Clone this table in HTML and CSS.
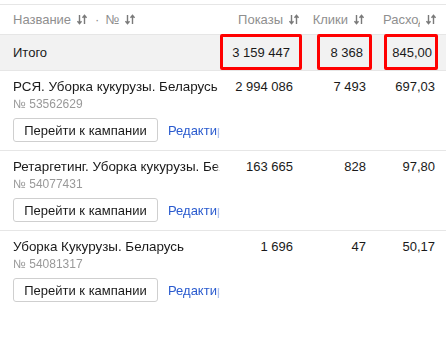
FILE: index.html
```html
<!DOCTYPE html>
<html lang="ru">
<head>
<meta charset="utf-8">
<link rel="stylesheet" href="styles.css">
</head>
<body>
<div class="table">
  <div class="row head">
    <div class="cell name-h">
      <span>Название</span>
      <svg class="sort" viewBox="0 0 10 11"><path d="M2.5 1V9.5M0.5 7.2L2.5 9.6L4.5 7.2M7.5 10V1.5M5.5 3.8L7.5 1.4L9.5 3.8"/></svg>
      <span class="dot">·</span>
      <span>№</span>
      <svg class="sort" viewBox="0 0 10 11"><path d="M2.5 1V9.5M0.5 7.2L2.5 9.6L4.5 7.2M7.5 10V1.5M5.5 3.8L7.5 1.4L9.5 3.8"/></svg>
    </div>
    <div class="cell num c1">Показы<svg class="sort" viewBox="0 0 10 11"><path d="M2.5 1V9.5M0.5 7.2L2.5 9.6L4.5 7.2M7.5 10V1.5M5.5 3.8L7.5 1.4L9.5 3.8"/></svg></div>
    <div class="cell num c2">Клики<svg class="sort" viewBox="0 0 10 11"><path d="M2.5 1V9.5M0.5 7.2L2.5 9.6L4.5 7.2M7.5 10V1.5M5.5 3.8L7.5 1.4L9.5 3.8"/></svg></div>
    <div class="cell num c3"><span class="trunc">Расход</span><svg class="sort" viewBox="0 0 10 11"><path d="M2.5 1V9.5M0.5 7.2L2.5 9.6L4.5 7.2M7.5 10V1.5M5.5 3.8L7.5 1.4L9.5 3.8"/></svg></div>
  </div>
  <div class="row total">
    <div class="cell name-t">Итого</div>
    <div class="cell tcell"><span class="box b1">3 159 447</span></div>
    <div class="cell tcell"><span class="box b2">8 368</span></div>
    <div class="cell tcell"><span class="box b3">845,00</span></div>
  </div>
  <div class="row item">
    <div class="cell name">
      <div class="title">РСЯ. Уборка кукурузы. Беларусь</div>
      <div class="id">№ 53562629</div>
      <div class="actions"><button class="btn">Перейти к кампании</button><a class="link" href="#">Редактировать</a></div>
    </div>
    <div class="cell val c1">2 994 086</div>
    <div class="cell val c2">7 493</div>
    <div class="cell val c3">697,03</div>
  </div>
  <div class="row item">
    <div class="cell name">
      <div class="title">Ретаргетинг. Уборка кукурузы. Беларусь</div>
      <div class="id">№ 54077431</div>
      <div class="actions"><button class="btn">Перейти к кампании</button><a class="link" href="#">Редактировать</a></div>
    </div>
    <div class="cell val c1">163 665</div>
    <div class="cell val c2">828</div>
    <div class="cell val c3">97,80</div>
  </div>
  <div class="row item last">
    <div class="cell name">
      <div class="title">Уборка Кукурузы. Беларусь</div>
      <div class="id">№ 54081317</div>
      <div class="actions"><button class="btn">Перейти к кампании</button><a class="link" href="#">Редактировать</a></div>
    </div>
    <div class="cell val c1">1 696</div>
    <div class="cell val c2">47</div>
    <div class="cell val c3">50,17</div>
  </div>
</div>
</body>
</html>
```

FILE: styles.css
```css
html, body {
  margin: 0;
  padding: 0;
  background: #fff;
}
body {
  font-family: "Liberation Sans", Arial, sans-serif;
  font-size: 13px;
  color: #1a1a1a;
}
.table {
  margin-top: 4px;
  border-top: 1px solid #e6e6e6;
  width: 446px;
  overflow: hidden;
}
.row {
  display: grid;
  grid-template-columns: 220px 82px 71px 73px;
  border-bottom: 1px solid #e6e6e6;
}
.row.last { border-bottom: none; }
.head {
  height: 29px;
  align-items: center;
  color: #8f8f8f;
}
.name-h {
  padding-left: 13px;
  display: flex;
  align-items: center;
}
.name-h .sort { margin: 0 0 0 6px; }
.dot { margin: 0 6px 0 8px; }
.sort {
  width: 10px;
  height: 11px;
  fill: none;
  stroke: #7a7a7a;
  stroke-width: 1.4;
  flex: none;
}
.num {
  display: flex;
  justify-content: flex-end;
  align-items: center;
}
.num .sort { margin-left: 6px; }
.head .c1 { padding-right: 3px; }
.head .c2 { padding-right: 9px; }
.head .c3 { padding-right: 10px; }
.trunc {
  display: inline-block;
  width: 37px;
  overflow: hidden;
  white-space: nowrap;
}
.total {
  height: 35px;
  background: #f2f2f2;
}
.name-t {
  padding-left: 13px;
  display: flex;
  align-items: center;
}
.tcell {
  display: flex;
  justify-content: flex-end;
  align-items: stretch;
  margin-top: -1px;
}
.box {
  border: 3px solid #ff0000;
  border-radius: 2px;
  display: flex;
  align-items: center;
  justify-content: flex-end;
  box-sizing: border-box;
}
.b1 { width: 82px; padding-right: 9px; }
.b2 { width: 55px; padding-right: 6px; margin-right: 1px; }
.b3 { width: 54px; padding-right: 3px; margin-right: 8px; }
.item {
  height: 79px;
}
.name {
  padding: 8px 0 0 13px;
  overflow: hidden;
  white-space: nowrap;
  font-size: 13.4px;
  -webkit-mask-image: linear-gradient(to right, #000 calc(100% - 4px), transparent 100%);
  mask-image: linear-gradient(to right, #000 calc(100% - 4px), transparent 100%);
}
.title {
  line-height: 16px;
  color: #1a1a1a;
}
.id {
  font-size: 12px;
  line-height: 16px;
  color: #999;
  margin-top: 1px;
}
.actions {
  display: flex;
  align-items: center;
  margin-top: 6px;
}
.btn {
  flex: none;
  font-family: inherit;
  font-size: 13px;
  color: #1a1a1a;
  background: #fff;
  border: 1px solid #cfcfcf;
  border-radius: 3px;
  height: 24px;
  width: 145px;
  padding: 0;
}
.link {
  flex: none;
  font-size: 13px;
  color: #2a5bcf;
  text-decoration: none;
  margin-left: 10px;
}
.val {
  padding-top: 8px;
  line-height: 16px;
  text-align: right;
}
.val.c1 { padding-right: 9px; }
.val.c2 { padding-right: 7px; }
.val.c3 { padding-right: 11px; }
```
